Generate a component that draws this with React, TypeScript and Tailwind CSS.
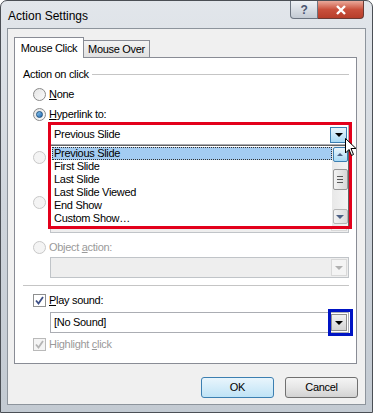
import React from "react";

const Tri = ({ color = "border-t-black" }: { color?: string }) => (
  <div className={`h-0 w-0 border-x-[4px] border-t-[4px] border-x-transparent ${color}`} />
);

const TriUp = () => (
  <div className="h-0 w-0 border-x-[3px] border-b-[3px] border-x-transparent border-b-[#4d6185]" />
);

const Radio = ({ checked, disabled }: { checked?: boolean; disabled?: boolean }) => (
  <div
    className={`flex h-[13px] w-[13px] shrink-0 items-center justify-center rounded-full border ${
      disabled
        ? "border-[#c8c8c8] bg-[#f4f4f4]"
        : "border-[#8a8a8a] bg-gradient-to-br from-[#e4e4e4] to-[#fbfbfb]"
    }`}
  >
    {checked && (
      <div className="h-[7px] w-[7px] rounded-full border border-[#1c5180] bg-gradient-to-br from-[#8ccaf0] to-[#1f66b0]" />
    )}
  </div>
);

const Check = ({ disabled }: { disabled?: boolean }) => (
  <div
    className={`flex h-[13px] w-[13px] shrink-0 items-center justify-center border ${
      disabled ? "border-[#b9b9b9] bg-[#f4f4f4]" : "border-[#8e8f8f] bg-white"
    }`}
  >
    <svg width="9" height="9" viewBox="0 0 9 9">
      <path
        d="M1 4.5 L3.5 7.5 L8 1"
        fill="none"
        stroke={disabled ? "#b4b4b4" : "#3d4f86"}
        strokeWidth="1.8"
      />
    </svg>
  </div>
);

const OptionRow = ({
  children,
  className = "",
  disabled,
}: {
  children: React.ReactNode;
  className?: string;
  disabled?: boolean;
}) => (
  <div
    className={`flex h-[14px] items-center gap-[3px] pl-[18px] ${
      disabled ? "text-[#9a9a9a]" : ""
    } ${className}`}
  >
    {children}
  </div>
);

const Field = ({
  className = "",
  disabled,
  children,
  button,
}: {
  className?: string;
  disabled?: boolean;
  children?: React.ReactNode;
  button?: React.ReactNode;
}) => (
  <div
    className={`ml-[35px] mr-[7px] flex h-[21px] items-center border pl-[2px] pr-[1px] ${
      disabled ? "border-[#c0c4c8] bg-[#eeeeee]" : "border-[#abadb3] bg-white"
    } ${className}`}
  >
    <div className="flex-1 pl-[1px]">{children}</div>
    {button}
  </div>
);

const GrayArrow = ({ disabled }: { disabled?: boolean }) => (
  <div
    className={`flex h-[17px] w-[16px] items-center justify-center border ${
      disabled
        ? "border-[#d9d9d9] bg-[#f4f4f4]"
        : "border-[#8f8f8f] bg-gradient-to-b from-[#f2f2f2] to-[#d4d4d4]"
    }`}
  >
    <Tri color={disabled ? "border-t-[#b0b0b0]" : "border-t-black"} />
  </div>
);

const items = ["Previous Slide", "First Slide", "Last Slide", "Last Slide Viewed", "End Show", "Custom Show…"];

export default function App() {
  return (
    <div className="h-[413px] w-[373px] bg-white font-['Liberation_Sans',Arial,sans-serif] text-[11px] tracking-[-0.3px] text-black">
      <div className="flex h-full flex-col rounded-t-[7px] border border-[#4b4f55] bg-gradient-to-b from-[#e2e6eb] via-[#cfd5dc] to-[#c3cad2] px-[6px] pb-[7px]">
        {/* Title bar */}
        <div className="flex h-[27px] items-start">
          <div className="pl-[1px] pt-[6px] text-[12px] tracking-normal">Action Settings</div>
          <div className="ml-auto mr-[2px] flex">
            <div className="flex h-[18px] w-[28px] items-center justify-center rounded-bl-[4px] border border-t-0 border-[#6b7480] bg-gradient-to-b from-[#eef1f5] to-[#c3cad3] text-[12px] font-bold text-[#4a5570]">
              ?
            </div>
            <div className="flex h-[18px] w-[46px] items-center justify-center rounded-br-[4px] border border-l-0 border-t-0 border-[#6b3a33] bg-gradient-to-b from-[#e9a99b] via-[#c9503c] to-[#b73e2a]">
              <svg width="12" height="10" viewBox="0 0 12 10">
                <path d="M2 1 L10 9 M10 1 L2 9" stroke="#fff" strokeWidth="2.4" />
              </svg>
            </div>
          </div>
        </div>

        {/* Client area */}
        <div className="flex flex-1 flex-col border border-[#8d949c] bg-[#f0f0f0] px-[6px] pt-[8px]">
          {/* Tabs */}
          <div className="flex items-end">
            <div className="relative z-10 -mb-px flex h-[21px] w-[70px] items-center justify-center border border-b-0 border-[#898c95] bg-white">
              Mouse Click
            </div>
            <div className="flex h-[17px] w-[66px] items-center justify-center border border-l-0 border-b-0 border-[#898c95] bg-gradient-to-b from-[#f3f3f3] to-[#e1e1e1]">
              Mouse Over
            </div>
          </div>

          {/* Panel */}
          <div className="relative h-[307px] w-[343px] border border-[#898c95] bg-white pt-[9px]">
            <div className="flex h-[14px] items-center gap-[3px] pl-[8px] pr-[7px]">
              <span>Action on click</span>
              <div className="h-px flex-1 bg-[#c5c5c5]" />
            </div>

            <OptionRow className="mt-[6px]">
              <Radio />
              <span>
                <u>N</u>one
              </span>
            </OptionRow>
            <OptionRow className="mt-[6px]">
              <Radio checked />
              <span>
                <u>H</u>yperlink to:
              </span>
            </OptionRow>
            <Field
              className="mt-[3px]"
              button={
                <div className="flex h-[16px] w-[17px] items-center justify-center border border-[#3c7fb1] bg-gradient-to-b from-[#eaf6fd] to-[#a7d9f5]">
                  <Tri />
                </div>
              }
            >
              Previous Slide
            </Field>
            {/* rows hidden behind the open list */}
            <OptionRow className="mt-[5px]" disabled>
              <Radio disabled />
            </OptionRow>
            <Field className="mt-[4px]" disabled />
            <OptionRow className="mt-[6px]" disabled>
              <Radio disabled />
            </OptionRow>
            <Field className="mt-[3px]" disabled button={<GrayArrow disabled />} />
            <OptionRow className="mt-[7px]" disabled>
              <Radio disabled />
              <span>
                Object <u>a</u>ction:
              </span>
            </OptionRow>
            <Field className="mt-[3px]" disabled button={<GrayArrow disabled />} />

            <div className="ml-[8px] mr-[7px] mt-[7px] h-px bg-[#c5c5c5]" />

            <OptionRow className="mt-[7px]">
              <Check />
              <span>
                <u>P</u>lay sound:
              </span>
            </OptionRow>
            <Field className="mt-[5px]" button={<GrayArrow />}>
              [No Sound]
            </Field>
            <OptionRow className="mt-[4px]" disabled>
              <Check disabled />
              <span>
                Highlight <u>c</u>lick
              </span>
            </OptionRow>

            {/* Dropdown list */}
            <div className="absolute left-[35px] top-[87px] z-20 flex h-[82px] w-[299px] border border-[#646464] bg-white">
              <div className="flex-1 pl-px pt-px">
                {items.map((t, i) => (
                  <div
                    key={t}
                    className={`flex h-[13px] items-center px-[1px] ${
                      i === 0 ? "border border-dotted border-[#333] bg-[#a3ccf2]" : "border border-transparent"
                    }`}
                  >
                    {t}
                  </div>
                ))}
              </div>
              <div className="flex w-[16px] flex-col items-center bg-gradient-to-r from-[#e8e8e8] to-[#f4f4f4] pt-px">
                <div className="flex h-[15px] w-[15px] items-center justify-center rounded-[2px] border border-[#3c7fb1] bg-gradient-to-b from-[#eaf6fd] to-[#a7d9f5]">
                  <TriUp />
                </div>
                <div className="mt-[7px] flex h-[21px] w-[15px] flex-col items-center justify-center gap-[2px] rounded-[2px] border border-[#979797] bg-gradient-to-r from-[#f3f3f3] to-[#d8d8d8]">
                  <div className="h-px w-[6px] bg-[#585858]" />
                  <div className="h-px w-[6px] bg-[#585858]" />
                  <div className="h-px w-[6px] bg-[#585858]" />
                </div>
                <div className="mt-auto mb-[2px] flex h-[15px] w-[15px] items-center justify-center rounded-[2px] border border-[#b5b5b5] bg-gradient-to-r from-[#f3f3f3] to-[#dcdcdc]">
                  <Tri color="border-t-[#4d6185]" />
                </div>
              </div>
            </div>

            {/* Red highlight box */}
            <div className="pointer-events-none absolute left-[33px] top-[64px] z-30 h-[107px] w-[304px] border-[3px] border-[#e3001b]" />

            {/* Mouse cursor */}
            <svg className="absolute left-[330px] top-[80px] z-40" width="12" height="19" viewBox="0 0 12 19">
              <path d="M0.5 0.5 L0.5 15 L4 11.5 L6.5 17.5 L8.5 16.5 L6 10.5 L11 10.5 Z" fill="#fff" stroke="#000" strokeWidth="1" />
            </svg>

            {/* Blue highlight box */}
            <div className="pointer-events-none absolute left-[313px] top-[251px] z-30 h-[27px] w-[25px] border-[3px] border-[#0014c4]" />
          </div>

          {/* Buttons */}
          <div className="mt-[13px] flex justify-end gap-[11px] pr-[1px]">
            <div className="flex h-[21px] w-[73px] items-center justify-center rounded-[3px] border border-[#3c7fb1] bg-gradient-to-b from-[#e9f5fc] via-[#d4ecf9] to-[#bfe3f6]">
              OK
            </div>
            <div className="flex h-[21px] w-[73px] items-center justify-center rounded-[3px] border border-[#707070] bg-gradient-to-b from-[#f4f4f4] via-[#e6e6e6] to-[#d2d2d2]">
              Cancel
            </div>
          </div>
        </div>
      </div>
    </div>
  );
}
